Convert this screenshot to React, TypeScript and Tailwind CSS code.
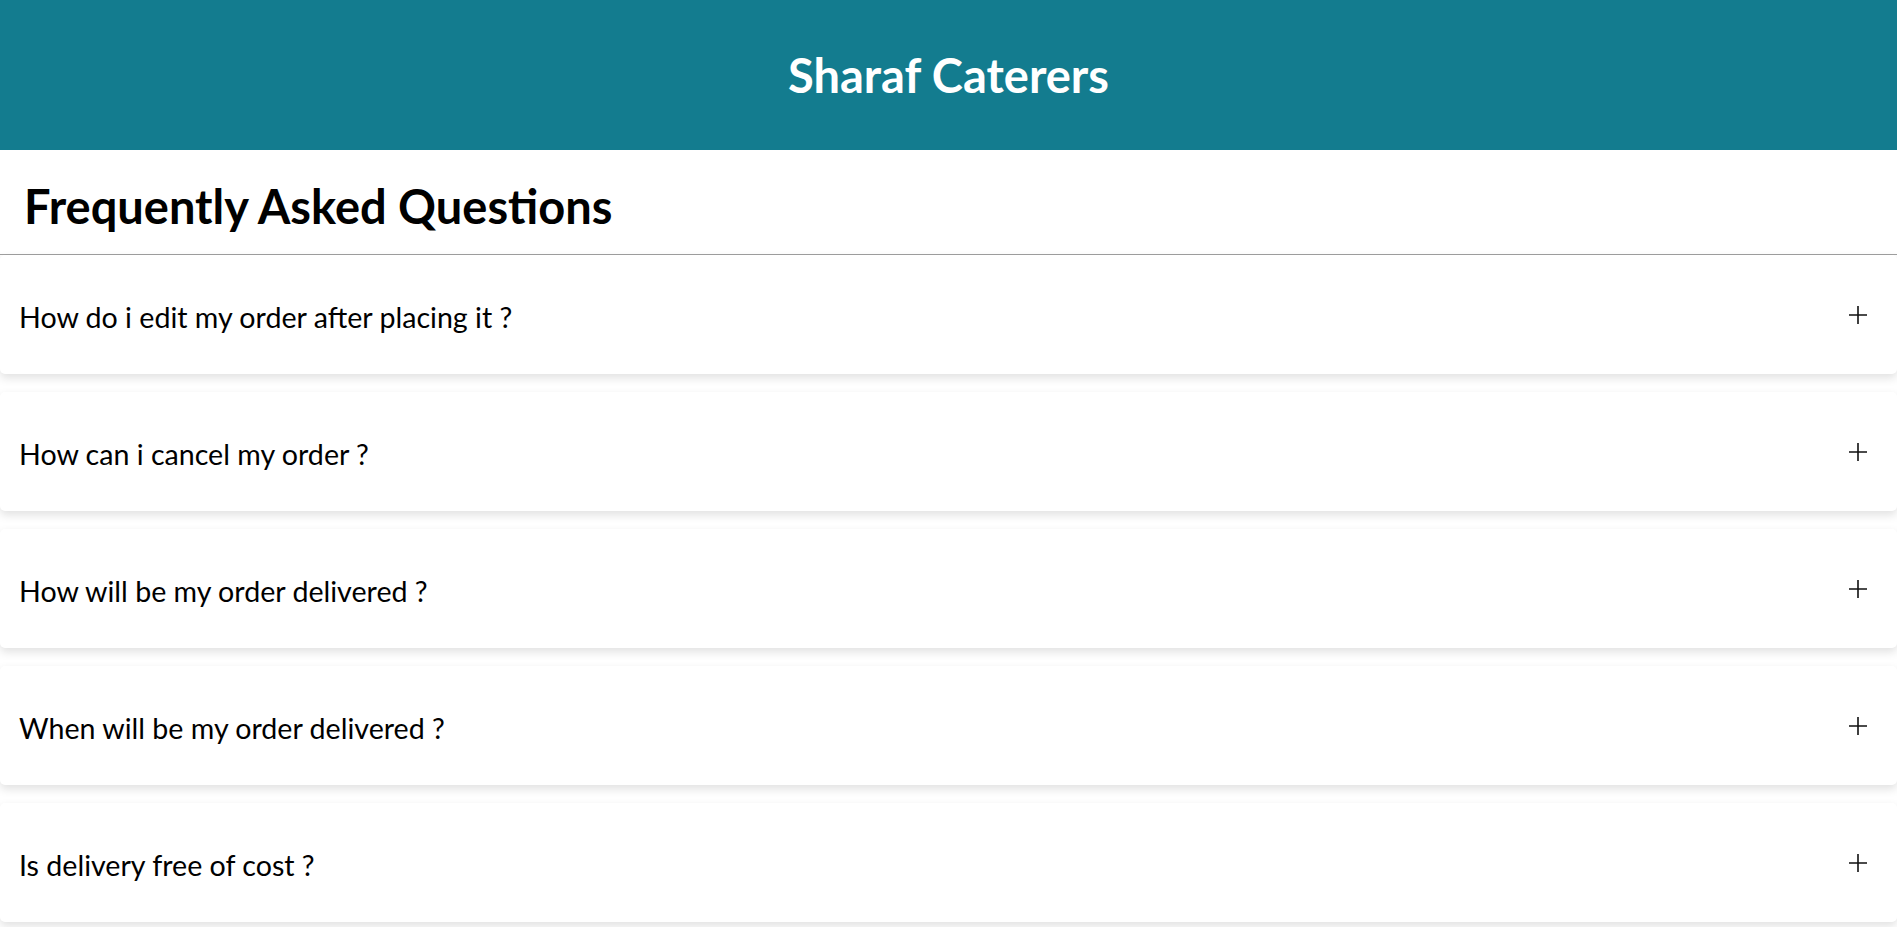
const questions = [
  'How do i edit my order after placing it ?',
  'How can i cancel my order ?',
  'How will be my order delivered ?',
  'When will be my order delivered ?',
  'Is delivery free of cost ?',
];

function PlusIcon() {
  return (
    <svg width="18" height="18" viewBox="0 0 18 18" fill="none" stroke="#111" strokeWidth="1.6" className="mt-[1px]">
      <path d="M9 0v18M0 9h18" />
    </svg>
  );
}

export default function App() {
  return (
    <div className="min-h-screen bg-white text-black font-['Lato','Liberation_Sans',sans-serif]">
      <header className="h-[150px] pt-[1px] bg-[#137c8f] flex items-center justify-center">
        <h1 className="text-[47px] font-bold text-white">Sharaf Caterers</h1>
      </header>

      <div className="h-[105px] pt-[8px] flex items-center px-[24px] border-b border-[#a0a0a0]">
        <h2 className="text-[47px] font-bold">Frequently Asked Questions</h2>
      </div>

      <div>
        {questions.map(q => (
          <div
            key={q}
            className="h-[119px] mb-[18px] bg-white rounded-[5px] shadow-[0_4px_10px_rgba(0,0,0,0.12)] flex items-center justify-between pl-[19px] pr-[30px]"
          >
            <span className="text-[28.6px] pt-[5px]">{q}</span>
            <PlusIcon />
          </div>
        ))}
      </div>
    </div>
  );
}
